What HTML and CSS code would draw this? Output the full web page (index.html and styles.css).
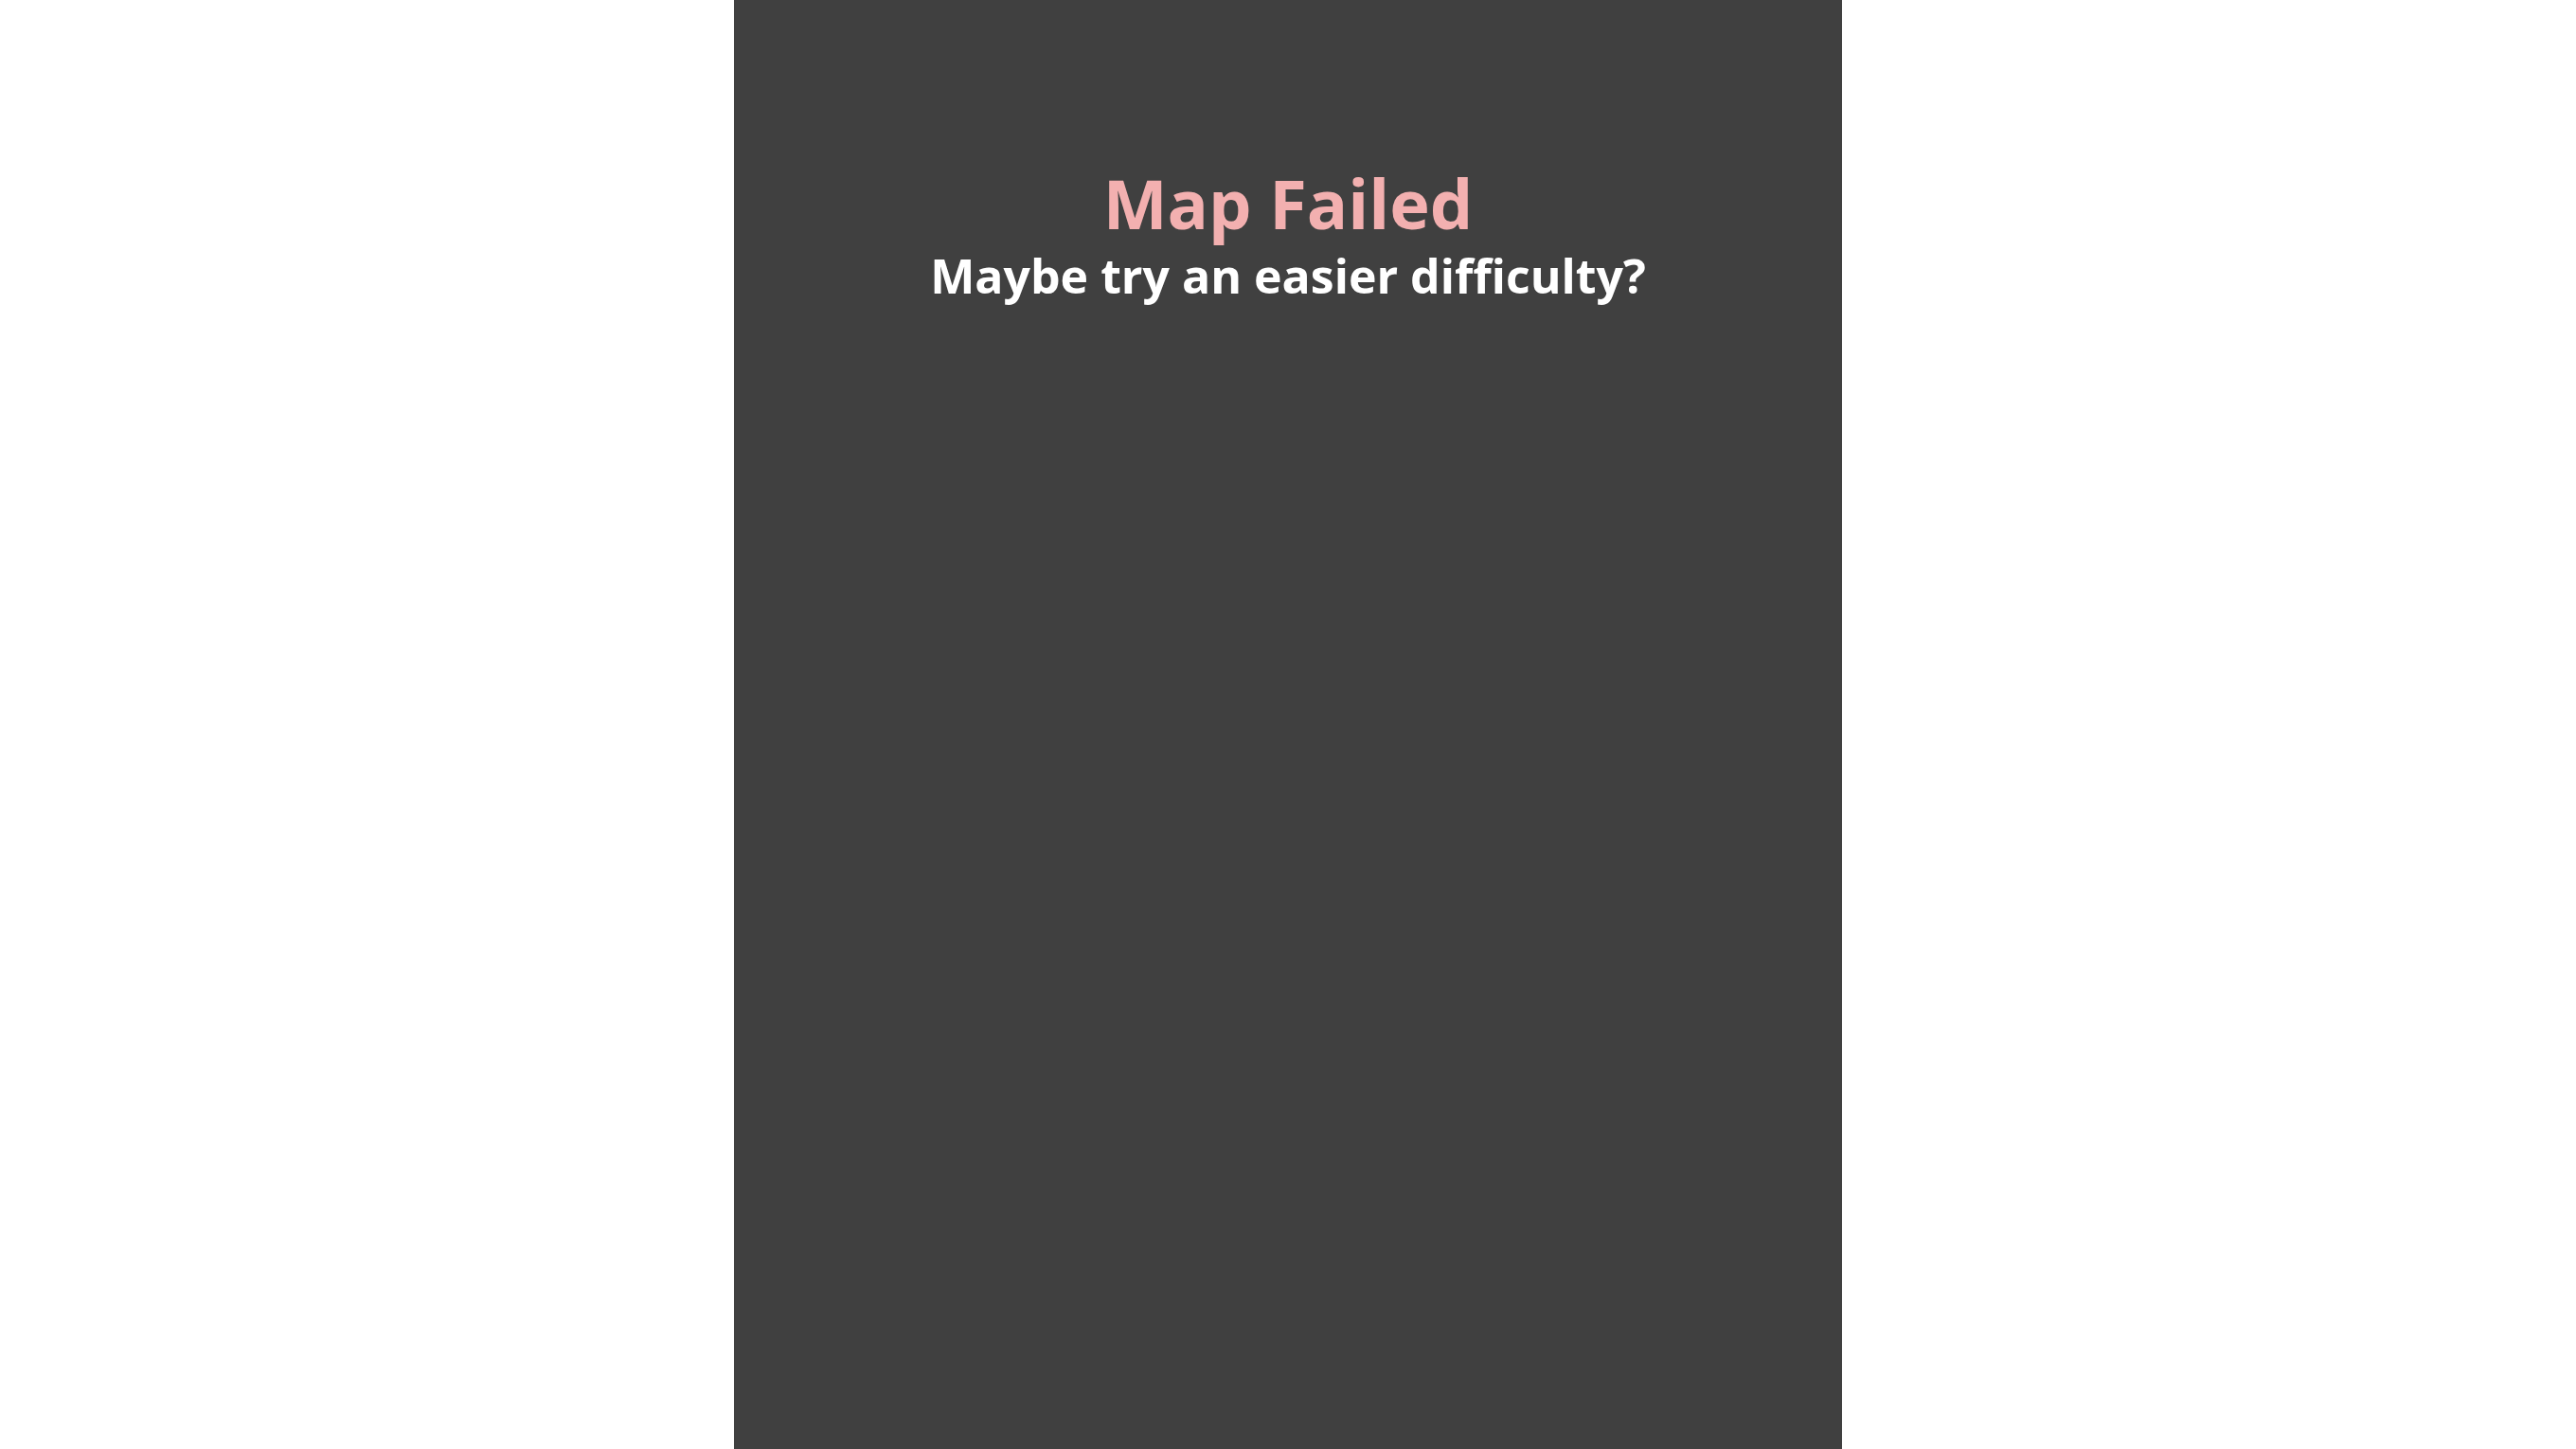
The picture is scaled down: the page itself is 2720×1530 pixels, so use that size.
FILE: index.html
```html
<!DOCTYPE html>
<html lang="en">
<head>
<meta charset="utf-8">
<title>Map Failed</title>
<link rel="stylesheet" href="styles.css">
</head>
<body>
<main class="panel">
  <h1 class="title">Map Failed</h1>
  <p class="subtitle">Maybe try an easier difficulty?</p>
</main>
</body>
</html>
```
FILE: styles.css
```css
html, body {
  margin: 0;
  padding: 0;
  height: 100%;
  background: #ffffff;
}
body {
  display: flex;
  justify-content: center;
  font-family: "Open Sans", "Liberation Sans", sans-serif;
}
.panel {
  width: 1170px;
  height: 100vh;
  background: #404040;
  display: flex;
  flex-direction: column;
  align-items: center;
  padding-top: 178px;
  box-sizing: border-box;
}
.title {
  margin: 0;
  font-size: 72px;
  line-height: 1;
  font-weight: 700;
  color: #f3b0b0;
}
.subtitle {
  margin: 16px 0 0;
  font-size: 50px;
  line-height: 1;
  font-weight: 700;
  color: #ffffff;
}
```
